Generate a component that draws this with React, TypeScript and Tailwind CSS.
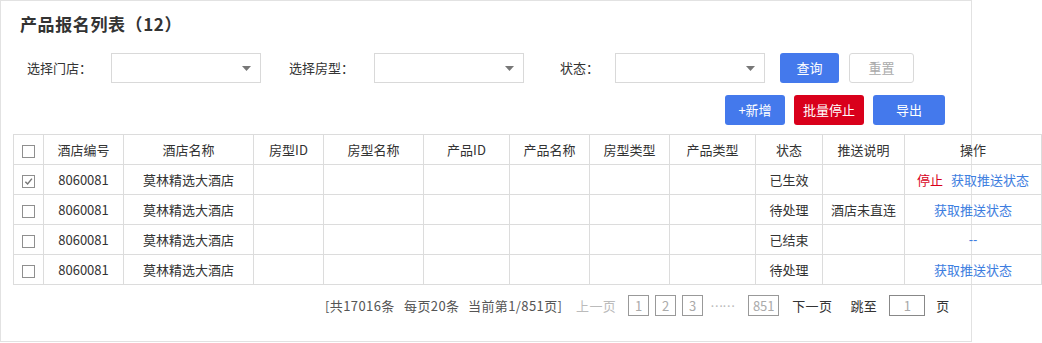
import { Fragment } from "react";

const FONT = "font-['Microsoft_YaHei','Noto_Sans_CJK_SC','Noto_Sans',sans-serif]";

const COLS = [
  { title: "", w: "w-[30px]" },
  { title: "酒店编号", w: "w-[80px]" },
  { title: "酒店名称", w: "w-[130px]" },
  { title: "房型ID", w: "w-[70px]" },
  { title: "房型名称", w: "w-[100px]" },
  { title: "产品ID", w: "w-[86px]" },
  { title: "产品名称", w: "w-[80px]" },
  { title: "房型类型", w: "w-[80px]" },
  { title: "产品类型", w: "w-[86px]" },
  { title: "状态", w: "w-[67px]" },
  { title: "推送说明", w: "w-[82px]" },
  { title: "操作", w: "w-[137px]" },
];

const ROWS = [
  { checked: true, status: "已生效", note: "", op: "stop" },
  { checked: false, status: "待处理", note: "酒店未直连", op: "get" },
  { checked: false, status: "已结束", note: "", op: "none" },
  { checked: false, status: "待处理", note: "", op: "get" },
];

function Checkbox({ checked }: { checked?: boolean }) {
  return (
    <span className="inline-flex w-[13px] h-[13px] border border-[#8f8f8f] bg-white items-center justify-center align-middle">
      {checked && (
        <svg className="w-[9px] h-[9px]" viewBox="0 0 10 10" fill="none">
          <path d="M1.5 5.2 L4 7.8 L8.8 1.8" stroke="#777" strokeWidth={1.6} />
        </svg>
      )}
    </span>
  );
}

function Select() {
  return (
    <div className="w-[150px] h-[30px] border border-[#d9d9d9] bg-white flex items-center justify-end pr-[9px]">
      <svg className="w-[9px] h-[5px]" viewBox="0 0 9 5">
        <path d="M0 0 H9 L4.5 5 Z" fill="#777" />
      </svg>
    </div>
  );
}

function PageBox({ n, w = "w-[21px]" }: { n: string; w?: string }) {
  return (
    <span className={`${w} h-[21px] border border-[#999] text-[#aaa] flex items-center justify-center`}>
      {n}
    </span>
  );
}

export default function App() {
  return (
    <div className={`w-[1042px] h-[343px] bg-white ${FONT}`}>
      <div className="w-[972px] h-[342px] border border-[#e2e2e2] text-[13px] text-[#333]">
        <h1 className="pl-[19px] pt-[11px] h-[52px] text-[17px] font-bold text-[#333] leading-[24px] tracking-[0.6px]">
          产品报名列表（12）
        </h1>

        <div className="flex items-center h-[30px]">
          <span className="ml-[26px] w-[84px]">选择门店：</span>
          <Select />
          <span className="ml-[28px] w-[85px]">选择房型：</span>
          <Select />
          <span className="ml-[36px] w-[55px]">状态：</span>
          <Select />
          <button className="ml-[15px] w-[59px] h-[30px] rounded-[3px] bg-[#4479ec] text-white">
            查询
          </button>
          <button className="ml-[10px] w-[65px] h-[30px] rounded-[3px] border border-[#d9d9d9] text-[#aaa]">
            重置
          </button>
        </div>

        <div className="flex justify-end gap-[9px] pr-[26px] mt-[12px] h-[30px]">
          <button className="w-[60px] h-[30px] rounded-[3px] bg-[#4479ec] text-white">+新增</button>
          <button className="w-[70px] h-[30px] rounded-[3px] bg-[#d9001b] text-white">批量停止</button>
          <button className="w-[72px] h-[30px] rounded-[3px] bg-[#4479ec] text-white">导出</button>
        </div>

        <table className="ml-[12px] mt-[9px] w-[1028px] border-collapse table-fixed">
          <thead>
            <tr className="h-[30px]">
              {COLS.map((c, i) => (
                <th key={i} className={`${c.w} border border-[#dcdcdc] font-normal text-center p-0`}>
                  {i === 0 ? <Checkbox /> : c.title}
                </th>
              ))}
            </tr>
          </thead>
          <tbody>
            {ROWS.map((r, i) => (
              <tr key={i} className="h-[30px]">
                <td className="border border-[#dcdcdc] text-center p-0">
                  <Checkbox checked={r.checked} />
                </td>
                <td className="border border-[#dcdcdc] text-center">8060081</td>
                <td className="border border-[#dcdcdc] text-center">莫林精选大酒店</td>
                {[0, 1, 2, 3, 4, 5].map((k) => (
                  <td key={k} className="border border-[#dcdcdc]" />
                ))}
                <td className="border border-[#dcdcdc] text-center">{r.status}</td>
                <td className="border border-[#dcdcdc] text-center">{r.note}</td>
                <td className="border border-[#dcdcdc] text-center text-[#3e7ee0]">
                  {r.op === "stop" && (
                    <Fragment>
                      <span className="text-[#d9001b] mr-[8px]">停止</span>
                      <span>获取推送状态</span>
                    </Fragment>
                  )}
                  {r.op === "get" && <span>获取推送状态</span>}
                  {r.op === "none" && <span className="text-[#3e7ee0] font-[Arial,'Liberation_Sans',sans-serif]">--</span>}
                </td>
              </tr>
            ))}
          </tbody>
        </table>

        <div className="flex items-center mt-[10px] h-[21px] pl-[324px] text-[#555]">
          <span className="w-[79px] tracking-[0.4px]">[共17016条</span>
          <span className="w-[64px] tracking-[0.4px]">每页20条</span>
          <span className="w-[108px] tracking-[0.4px]">当前第1/851页]</span>
          <span className="text-[#bbb] tracking-[0.4px]">上一页</span>
          <div className="ml-[12px] flex gap-[6px]">
            <PageBox n="1" />
            <PageBox n="2" />
            <PageBox n="3" />
          </div>
          <span className="ml-[7px] text-[#bbb] tracking-[-1px]">……</span>
          <span className="ml-[14px]">
            <PageBox n="851" w="w-[31px]" />
          </span>
          <span className="ml-[13px] text-[#333] tracking-[0.4px]">下一页</span>
          <span className="ml-[18px] text-[#333] tracking-[0.4px]">跳至</span>
          <span className="ml-[12px] w-[36px] h-[21px] border border-[#888] text-[#aaa] flex items-center justify-center">
            1
          </span>
          <span className="ml-[11px] text-[#333]">页</span>
        </div>
      </div>
    </div>
  );
}
